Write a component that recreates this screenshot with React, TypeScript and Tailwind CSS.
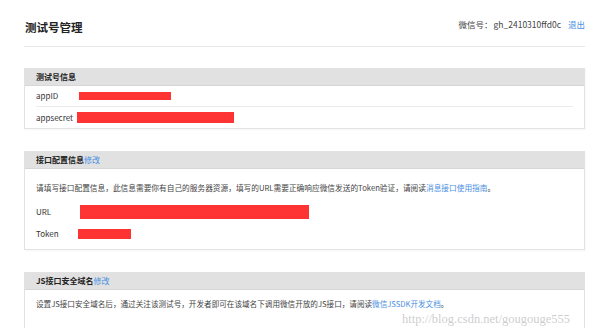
export default function App() {
  return (
    <div className="relative w-[604px] h-[328px] overflow-hidden bg-white font-['Noto_Sans_CJK_SC',sans-serif] text-[#333]">
      <div className="ml-[24px] w-[561px]">
        {/* top bar */}
        <div className="flex items-start justify-between pt-[19px] pb-[11px] border-b border-[#e6e6e6]">
          <h1 className="pl-[1px] text-[11.5px] leading-[16px] font-bold text-[#222]">测试号管理</h1>
          <div className="flex items-center text-[8.5px] leading-[10px] text-[#444]">
            <span>微信号：</span>
            <span className="ml-[1px]">gh_2410310ffd0c</span>
            <a className="ml-[7px] text-[#4a90e2]">退出</a>
          </div>
        </div>

        {/* test account info */}
        <div className="mt-[21px] border border-[#e2e2e2] shadow-[1px_1px_2px_rgba(0,0,0,0.04)]">
          <div className="h-[17px] px-[11px] flex items-center bg-[#e1e1e1] border-b border-[#d6d6d6] text-[8px] font-bold text-[#222]">
            测试号信息
          </div>
          <div className="px-[11px]">
            <div className="h-[21px] flex items-center border-b border-[#ececec] text-[8px]">
              <span className="w-[43px]">appID</span>
              <span className="w-[92px] h-[8px] bg-[#fe3434]" />
            </div>
            <div className="h-[21px] flex items-center text-[8px]">
              <span className="w-[41px]">appsecret</span>
              <span className="w-[157px] h-[11px] bg-[#fe3434]" />
            </div>
          </div>
        </div>

        {/* interface config */}
        <div className="mt-[22px] border border-[#e2e2e2] shadow-[1px_1px_2px_rgba(0,0,0,0.04)]">
          <div className="h-[17px] px-[11px] flex items-center bg-[#e1e1e1] border-b border-[#d6d6d6] text-[8px] font-bold text-[#222]">
            接口配置信息<a className="font-normal text-[#4a90e2]">修改</a>
          </div>
          <div className="px-[11px] pt-[13px] pb-[8px] text-[8px]">
            <p className="leading-[12px] text-[7.7px] text-[#444]">
              请填写接口配置信息，此信息需要你有自己的服务器资源，填写的URL需要正确响应微信发送的Token验证，请阅读
              <a className="text-[#4a90e2]">消息接口使用指南</a>。
            </p>
            <div className="mt-[10px] h-[16px] flex items-center">
              <span className="w-[44px]">URL</span>
              <span className="w-[229px] h-[14px] bg-[#fe3434]" />
            </div>
            <div className="mt-[7px] h-[14px] flex items-center">
              <span className="w-[42px]">Token</span>
              <span className="w-[53px] h-[10px] bg-[#fe3434]" />
            </div>
          </div>
        </div>

        {/* JS domain */}
        <div className="mt-[22px] h-[80px] border border-[#e2e2e2]">
          <div className="h-[17px] px-[11px] flex items-center bg-[#e1e1e1] border-b border-[#d6d6d6] text-[8px] font-bold text-[#222]">
            JS接口安全域名<a className="font-normal text-[#4a90e2]">修改</a>
          </div>
          <div className="px-[11px] pt-[8px]">
            <p className="leading-[12px] text-[7.6px] text-[#444]">
              设置JS接口安全域名后，通过关注该测试号，开发者即可在该域名下调用微信开放的JS接口，请阅读
              <a className="text-[#4a90e2]">微信JSSDK开发文档</a>。
            </p>
          </div>
        </div>
      </div>

      {/* watermark */}
      <div className="absolute left-[402px] top-[312px] font-['Liberation_Serif',serif] text-[12.5px] leading-[14px] text-[#9a9a9a]/50 whitespace-nowrap">
        http://blog.csdn.net/gougouge555
      </div>
    </div>
  );
}
